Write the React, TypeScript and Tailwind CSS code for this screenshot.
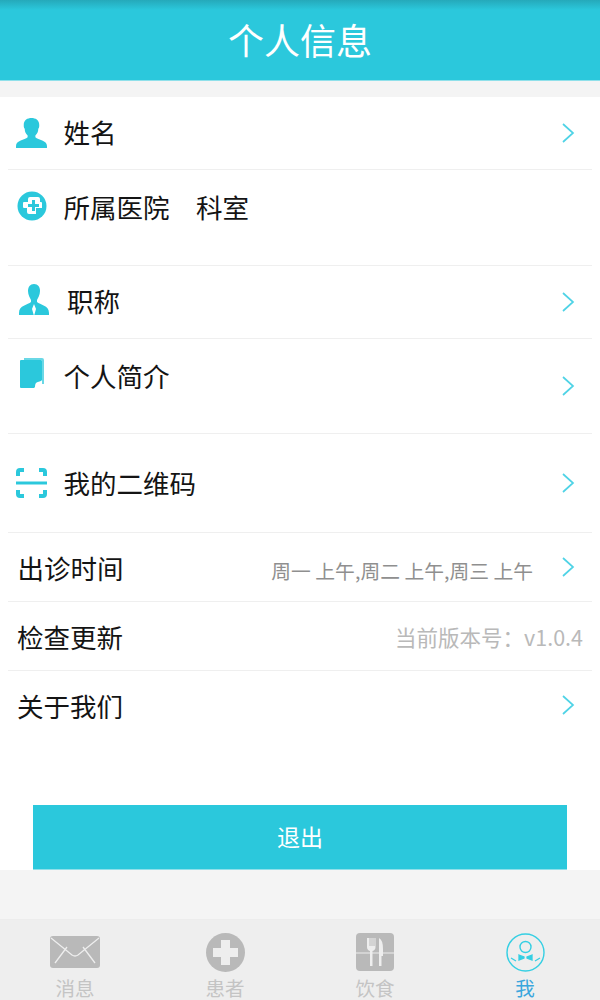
import React from "react";

const cyan = "#2bc8dc";

function Chevron() {
  return (
    <svg width="14" height="22" viewBox="0 0 14 22" fill="none" className="shrink-0">
      <path d="M2 2 L12 11 L2 20" stroke="#4fd3e6" strokeWidth="1.700" />
    </svg>
  );
}

function Row({ h, icon, iconW = "w-[55.500px]", label, labelClass = "", right, chevron = true, pt, chevPt }: { h: string; icon?: React.ReactNode; iconW?: string; label: string; labelClass?: string; right?: React.ReactNode; chevron?: boolean; pt: string; chevPt: string }) {
  return (
    <div className={`flex mx-2 border-b border-[#efefef] ${h}`}>
      {icon && <div className={`shrink-0 ${iconW} ${pt}`}>{icon}</div>}
      <div className={`flex-1 min-w-0 text-[26.500px] leading-[32px] text-[#141414] whitespace-pre ${labelClass} ${pt}`}>{label}</div>
      {right}
      <div className={`w-[31px] shrink-0 ${chevPt}`}>{chevron && <Chevron />}</div>
    </div>
  );
}

function Tab({ icon, label, active }: { icon: React.ReactNode; label: string; active?: boolean }) {
  return (
    <div className="flex flex-col items-center">
      <div className="h-[40px] flex items-center">{icon}</div>
      <div className={`text-[19.500px] leading-[24px] pt-[4px] ${active ? "text-[#3aa6dd]" : "text-[#c4c4c4]"}`}>{label}</div>
    </div>
  );
}

export default function App() {
  return (
    <div className="w-[600px] h-[1000px] flex flex-col bg-[#f4f4f4] overflow-hidden" style={{ fontFamily: '"Noto Sans CJK SC", "Noto Sans", sans-serif' }}>
      <div className="h-[81px] shrink-0 bg-[linear-gradient(#25a9ba_0px,#2bc8dc_10px)] border-b border-[#8fe0ea] flex items-center justify-center text-white text-[36px] pb-[3px]">个人信息</div>
      <div className="h-[16px] shrink-0" />
      <div className="bg-white h-[773px] shrink-0 flex flex-col">
        <Row
          h="h-[73px]"
          pt="pt-[19px]"
          chevPt="pt-[25px]"
          label="姓名"
          icon={
            <svg width="31" height="30" viewBox="0 0 32 31" className="ml-[8px] mt-[2px]" fill={cyan}>
              <path d="M16 0c4 0 8 2 8 7 0 2 0 3-1 4 0 3-1 5-3 7v2c3 3 12 3 12 9v2H0v-2c0-6 9-6 12-9v-2c-2-2-3-4-3-7-1-1-1-2-1-4 0-5 4-7 8-7z" />
            </svg>
          }
        />
        <Row
          h="h-[96px]"
          pt="pt-[21px]"
          chevPt=""
          chevron={false}
          label="所属医院　科室"
          icon={
            <svg width="30" height="30" viewBox="0 0 30 30" className="ml-[9px]">
              <circle cx="15" cy="15" r="14.500" fill={cyan} />
              <path d="M13 6h8a2 2 0 0 1 2 2v3h1a1 1 0 0 1 1 1v5h-6v6h-7a2 2 0 0 1-2-2v-4H7a1 1 0 0 1-1-1v-4a1 1 0 0 1 1-1h4V8a2 2 0 0 1 2-2z" fill="white" />
              <path d="M15 9h3v4h4v3h-4v4h-3v-4h-4v-3h4z" fill={cyan} />
            </svg>
          }
        />
        <Row
          h="h-[73px]"
          pt="pt-[19px]"
          chevPt="pt-[25px]"
          iconW="w-[59px]"
          label="职称"
          icon={
            <svg width="32" height="34" viewBox="0 0 32 34" className="ml-[10px] -mt-[2px]">
              <path d="M16 1c4 0 6 3 6 7 0 4-2 7-3 9v2c3 3 12 3 12 11v2H1v-2c0-8 9-8 12-11v-2c-1-2-3-5-3-9 0-4 2-7 6-7z" fill={cyan} />
              <path d="M16 21l2 5-2 7-2-7z" fill="white" />
            </svg>
          }
        />
        <Row
          h="h-[95px]"
          pt="pt-[21px]"
          chevPt="pt-[36px]"
          label="个人简介"
          icon={
            <svg width="26" height="31" viewBox="0 0 26 31" className="ml-[11px] -mt-[2px]">
              <path d="M5 0h18a2 2 0 0 1 2 2v24h-2V2H5z" fill={cyan} opacity="0.7" />
              <path d="M2 2h20a1 1 0 0 1 1 1v19l-8 8H2a1 1 0 0 1-1-1V3a1 1 0 0 1 1-1z" fill={cyan} />
              <path d="M23 23v1l-6 6h-1c0-2 0-4 1-5s4-2 6-2z" fill="white" />
            </svg>
          }
        />
        <Row
          h="h-[99px]"
          pt="pt-[33px]"
          chevPt="pt-[38px]"
          label="我的二维码"
          icon={
            <svg width="31" height="30" viewBox="0 0 31 30" className="ml-[8px] mt-[1px]" fill="none" stroke={cyan}>
              <path d="M2 8V4a2 2 0 0 1 2-2h4M23 2h4a2 2 0 0 1 2 2v4M2 22v4a2 2 0 0 0 2 2h4M23 28h4a2 2 0 0 0 2-2v-4" strokeWidth="4" />
              <path d="M0 15h31" strokeWidth="3" />
            </svg>
          }
        />
        <Row
          h="h-[69px]"
          pt="pt-[19px]"
          chevPt="pt-[23px]"
          label="出诊时间"
          labelClass="pl-[9.500px]"
          right={<div className="text-[19.800px] leading-[28px] text-[#8f8f8f] pt-[24px] pr-[28px] whitespace-nowrap">周一 上午,周二 上午,周三 上午</div>}
        />
        <div className="flex mx-2 border-b border-[#efefef] h-[69px]">
          <div className="flex-1 text-[26.500px] leading-[32px] text-[#141414] pl-[9px] pt-[19px]">检查更新</div>
          <div className="text-[21.500px] leading-[30px] text-[#b9b9b9] pt-[20px] whitespace-nowrap" style={{ fontFamily: '"Noto Sans CJK SC", Roboto, sans-serif' }}>当前版本号：v1.0.4</div>
          <div className="w-[9px]" />
        </div>
        <Row h="h-[69px] !border-b-0" pt="pt-[19px]" chevPt="pt-[23px]" label="关于我们" labelClass="pl-[9px]" />
        <div className="flex-1 flex flex-col justify-end items-center">
          <div className="w-[534px] h-[65px] bg-[#2bc8dc] border-b border-[#8fe0ea] flex items-center justify-center text-white text-[23px] pb-[2px]">退出</div>
        </div>
      </div>
      <div className="flex-1" />
      <div className="h-[81px] shrink-0 bg-[#eeeeee] border-t border-[#ececec] grid grid-cols-4 pt-[12px]">
        <Tab
          label="消息"
          icon={
            <svg width="50" height="32" viewBox="0 0 50 32">
              <rect width="50" height="32" rx="3" fill="#b9b9b9" />
              <path d="M1 2l21 17q3 2 6 0L49 2M5 27l12-16M45 27L33 11" stroke="#eeeeee" strokeWidth="1.300" fill="none" />
            </svg>
          }
        />
        <Tab
          label="患者"
          icon={
            <svg width="39" height="39" viewBox="0 0 39 39">
              <circle cx="19.500" cy="19.500" r="19.500" fill="#b9b9b9" />
              <path d="M15 7h9v8h8v9h-8v8h-9v-8H7v-9h8z" fill="#eeeeee" />
            </svg>
          }
        />
        <Tab
          label="饮食"
          icon={
            <svg width="38" height="38" viewBox="0 0 38 38">
              <rect width="38" height="38" rx="4" fill="#b9b9b9" />
              <path d="M0 20h38" stroke="#eeeeee" strokeWidth="1.200" />
              <path d="M11 5v9q0 3 3 4v15h2.500V18q3-1 3-4V5h-1v8h-1V5h-1v8h-1V5h-1v8h-1V5z" fill="#eeeeee" />
              <path d="M23 5q4 2 4 11v7h-1.500v10H23z" fill="#eeeeee" />
            </svg>
          }
        />
        <Tab
          active
          label="我"
          icon={
            <svg width="39" height="39" viewBox="0 0 39 39" fill="none" stroke="#35cfe3">
              <circle cx="19.500" cy="19.500" r="18.500" strokeWidth="1.400" />
              <circle cx="19.500" cy="14" r="5.500" strokeWidth="1.400" />
              <path d="M13 22l5 2v1l-5 2zM26 22l-5 2v1l5 2z" strokeWidth="1.300" fill="#35cfe3" />
              <path d="M5 25l5 3M34 25l-5 3" strokeWidth="1.300" />
            </svg>
          }
        />
      </div>
    </div>
  );
}
